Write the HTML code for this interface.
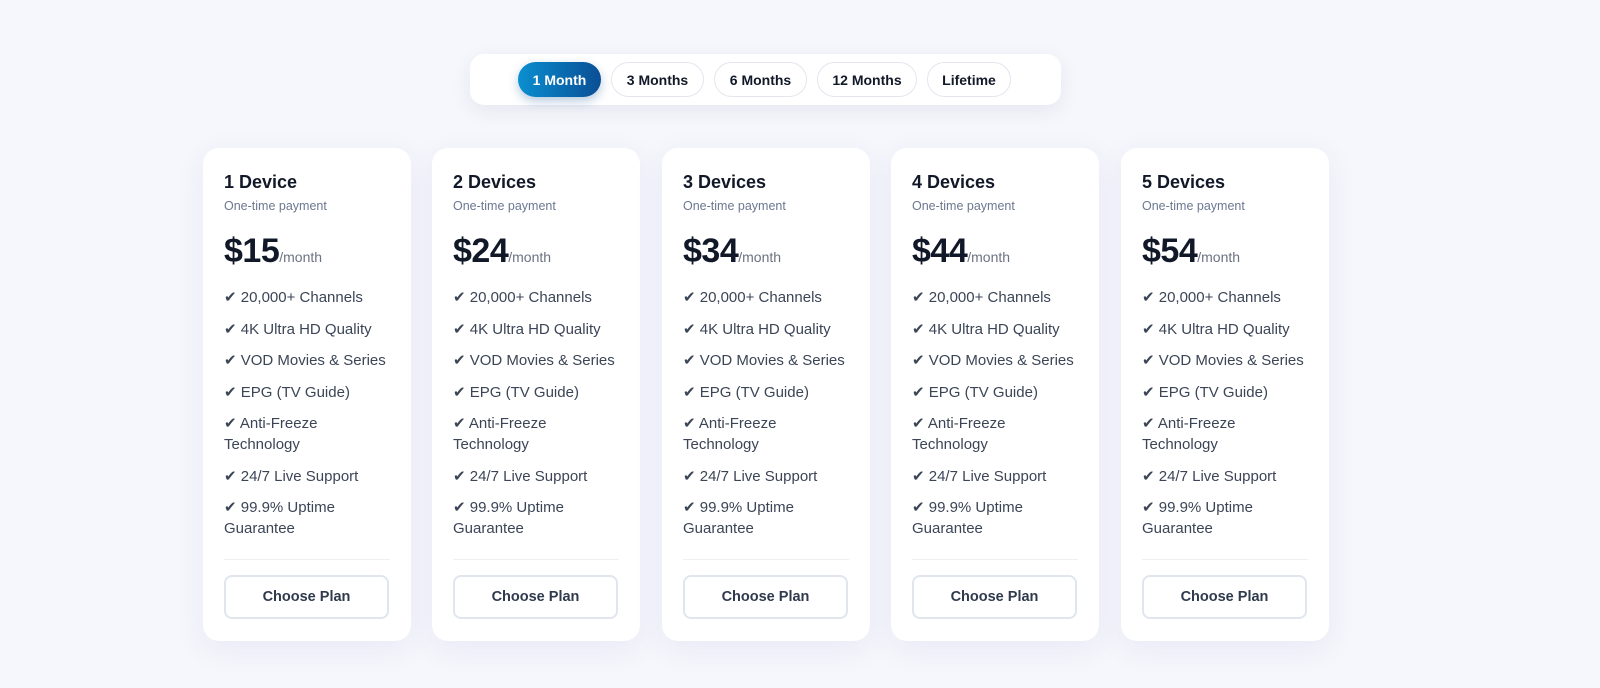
<!DOCTYPE html>
<html><head><meta charset="utf-8"><style>
*{box-sizing:border-box;margin:0;padding:0}
body{width:1600px;height:688px;background:#f6f7fc;font-family:"Liberation Sans",sans-serif;color:#111827;position:relative;overflow:hidden}
.tabs{position:absolute;left:470px;top:54px;width:591px;height:51px;background:#fff;border-radius:14px;box-shadow:0 6px 20px rgba(30,40,90,.08);display:flex;align-items:center;padding-left:48px;gap:10px}
.tab{height:35px;border-radius:18px;border:1px solid #e3e6ee;background:#fff;font-size:14px;font-weight:bold;display:flex;align-items:center;justify-content:center;color:#111827}
.tab.on{background:linear-gradient(90deg,#0a8fd0,#0a4e95);color:#fff;border:none;box-shadow:0 4px 10px rgba(10,80,150,.3)}
.card{position:absolute;top:148px;width:208px;height:493px;background:#fff;border-radius:16px;box-shadow:0 8px 30px rgba(60,70,150,.08);padding:0 21px}
.card h3{font-size:18px;font-weight:bold;margin-top:23px;line-height:22px}
.sub{font-size:12.5px;color:#6b7891;margin-top:5px;line-height:16px}
.price{margin-top:16px;line-height:42px;white-space:nowrap}
.price b{font-size:34px;font-weight:bold;letter-spacing:-0.5px}
.price span{font-size:14px;color:#6b7280}
ul{list-style:none;margin-top:8px}
li{font-size:15px;color:#3b4556;line-height:21px;margin-bottom:10.5px}
.div{position:absolute;left:21px;right:21px;top:411px;border-top:1px solid #eef0f4}
.btn{position:absolute;left:21px;top:427px;width:165px;height:44px;border:2px solid #e1e5ee;border-radius:8px;display:flex;align-items:center;justify-content:center;font-size:14.5px;font-weight:bold;color:#2f3a4d}
</style></head><body>
<div class="tabs">
<div class="tab on" style="width:83px">1 Month</div>
<div class="tab" style="width:93px">3 Months</div>
<div class="tab" style="width:93px">6 Months</div>
<div class="tab" style="width:100px">12 Months</div>
<div class="tab" style="width:84px">Lifetime</div>
</div>
<div class="card" style="left:203px"><h3>1 Device</h3><div class="sub">One-time payment</div><div class="price"><b>$15</b><span>/month</span></div><ul><li>✔ 20,000+ Channels</li><li>✔ 4K Ultra HD Quality</li><li>✔ VOD Movies &amp; Series</li><li>✔ EPG (TV Guide)</li><li>✔ Anti-Freeze Technology</li><li>✔ 24/7 Live Support</li><li>✔ 99.9% Uptime Guarantee</li></ul><div class="div"></div><div class="btn">Choose Plan</div></div>
<div class="card" style="left:432px"><h3>2 Devices</h3><div class="sub">One-time payment</div><div class="price"><b>$24</b><span>/month</span></div><ul><li>✔ 20,000+ Channels</li><li>✔ 4K Ultra HD Quality</li><li>✔ VOD Movies &amp; Series</li><li>✔ EPG (TV Guide)</li><li>✔ Anti-Freeze Technology</li><li>✔ 24/7 Live Support</li><li>✔ 99.9% Uptime Guarantee</li></ul><div class="div"></div><div class="btn">Choose Plan</div></div>
<div class="card" style="left:662px"><h3>3 Devices</h3><div class="sub">One-time payment</div><div class="price"><b>$34</b><span>/month</span></div><ul><li>✔ 20,000+ Channels</li><li>✔ 4K Ultra HD Quality</li><li>✔ VOD Movies &amp; Series</li><li>✔ EPG (TV Guide)</li><li>✔ Anti-Freeze Technology</li><li>✔ 24/7 Live Support</li><li>✔ 99.9% Uptime Guarantee</li></ul><div class="div"></div><div class="btn">Choose Plan</div></div>
<div class="card" style="left:891px"><h3>4 Devices</h3><div class="sub">One-time payment</div><div class="price"><b>$44</b><span>/month</span></div><ul><li>✔ 20,000+ Channels</li><li>✔ 4K Ultra HD Quality</li><li>✔ VOD Movies &amp; Series</li><li>✔ EPG (TV Guide)</li><li>✔ Anti-Freeze Technology</li><li>✔ 24/7 Live Support</li><li>✔ 99.9% Uptime Guarantee</li></ul><div class="div"></div><div class="btn">Choose Plan</div></div>
<div class="card" style="left:1121px"><h3>5 Devices</h3><div class="sub">One-time payment</div><div class="price"><b>$54</b><span>/month</span></div><ul><li>✔ 20,000+ Channels</li><li>✔ 4K Ultra HD Quality</li><li>✔ VOD Movies &amp; Series</li><li>✔ EPG (TV Guide)</li><li>✔ Anti-Freeze Technology</li><li>✔ 24/7 Live Support</li><li>✔ 99.9% Uptime Guarantee</li></ul><div class="div"></div><div class="btn">Choose Plan</div></div>
</body></html>
